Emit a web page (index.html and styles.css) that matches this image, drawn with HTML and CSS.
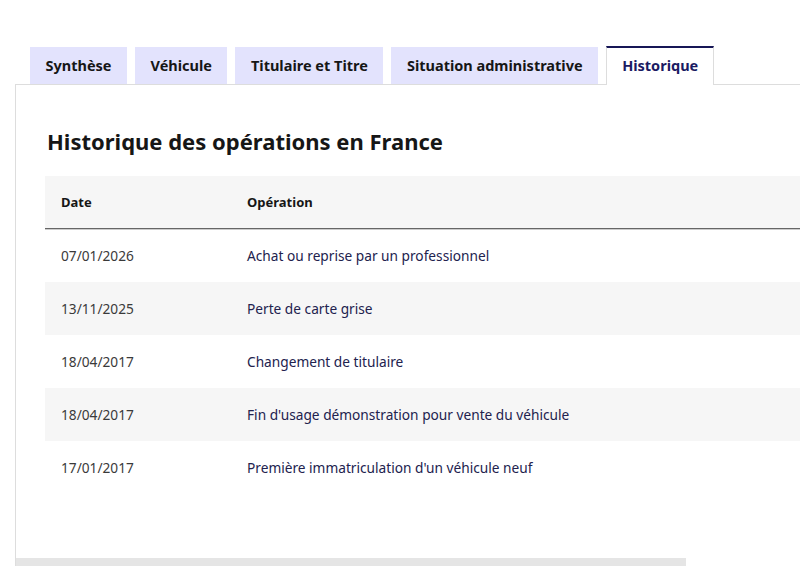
FILE: index.html
```html
<!DOCTYPE html>
<html lang="fr">
<head>
  <meta charset="UTF-8">
  <title>Historique du véhicule</title>
  <link rel="stylesheet" href="styles.css">
</head>
<body>

  <div class="tabs">
    <ul class="tab-list">
      <li class="tab">Synthèse</li>
      <li class="tab">Véhicule</li>
      <li class="tab">Titulaire et Titre</li>
      <li class="tab">Situation administrative</li>
      <li class="tab tab-active">Historique</li>
    </ul>

    <div class="tab-panel">
      <h2 class="panel-title">Historique des opérations en France</h2>

      <div class="table-wrap">
        <table class="history">
          <thead>
            <tr>
              <th class="col-date">Date</th>
              <th>Opération</th>
            </tr>
          </thead>
          <tbody>
            <tr><td class="date">07/01/2026</td><td>Achat ou reprise par un professionnel</td></tr>
            <tr><td class="date">13/11/2025</td><td>Perte de carte grise</td></tr>
            <tr><td class="date">18/04/2017</td><td>Changement de titulaire</td></tr>
            <tr><td class="date">18/04/2017</td><td>Fin d'usage démonstration pour vente du véhicule</td></tr>
            <tr><td class="date">17/01/2017</td><td>Première immatriculation d'un véhicule neuf</td></tr>
          </tbody>
        </table>
      </div>

      <div class="scrollbar"><div class="scroll-thumb"></div></div>
    </div>
  </div>

</body>
</html>
```

FILE: styles.css
```css
body {
  margin: 0;
  font-family: "Noto Sans", Arial, sans-serif;
  color: #161616;
  background-color: #fff;
  overflow: hidden;
}

.tabs {
  margin-top: 46px;
  margin-left: 15px;
}

.tab-list {
  display: flex;
  gap: 8px;
  list-style: none;
  margin: 0;
  padding: 1px 0 0 15px;
  position: relative;
  z-index: 1;
}

.tab {
  background-color: #e3e3fd;
  color: #161616;
  font-size: 14.5px;
  font-weight: bold;
  height: 37px;
  line-height: 37px;
  padding: 0 15.5px;
  white-space: nowrap;
}

.tab-active {
  background-color: #fff;
  color: #1a1a62;
  line-height: 35px;
  margin-top: -1px;
  border-top: 2px solid #161656;
  border-left: 1px solid #ddd;
  border-right: 1px solid #ddd;
  padding: 0 15px;
}

.tab-panel {
  border-top: 1px solid #ddd;
  border-left: 1px solid #ddd;
  margin-top: -1px;
  padding: 42px 0 0 29px;
  height: 440px;
  position: relative;
}

.panel-title {
  font-size: 22px;
  line-height: 28px;
  margin: 0 0 21px 2px;
  color: #161616;
}

.table-wrap {
  overflow: hidden;
}

.history {
  border-collapse: collapse;
  width: 900px;
  font-size: 13.7px;
}

.history th {
  background-color: #f6f6f6;
  text-align: left;
  font-size: 13px;
  font-weight: bold;
  height: 52px;
  padding: 0 16px;
  border-bottom: 1px solid #666;
  box-shadow: 0 1px 0 #ccc;
}

.history .col-date {
  width: 154px;
}

.history td {
  height: 53px;
  padding: 0 16px;
  color: #22224e;
}

.history td.date {
  color: #3a3a3a;
}

.history tbody tr:nth-child(even) {
  background-color: #f6f6f6;
}

.scrollbar {
  position: absolute;
  left: 0;
  right: 0;
  bottom: 0;
  height: 8px;
  border-bottom: 1px solid #ddd;
}

.scroll-thumb {
  width: 670px;
  height: 100%;
  background-color: #e5e5e5;
}
```
